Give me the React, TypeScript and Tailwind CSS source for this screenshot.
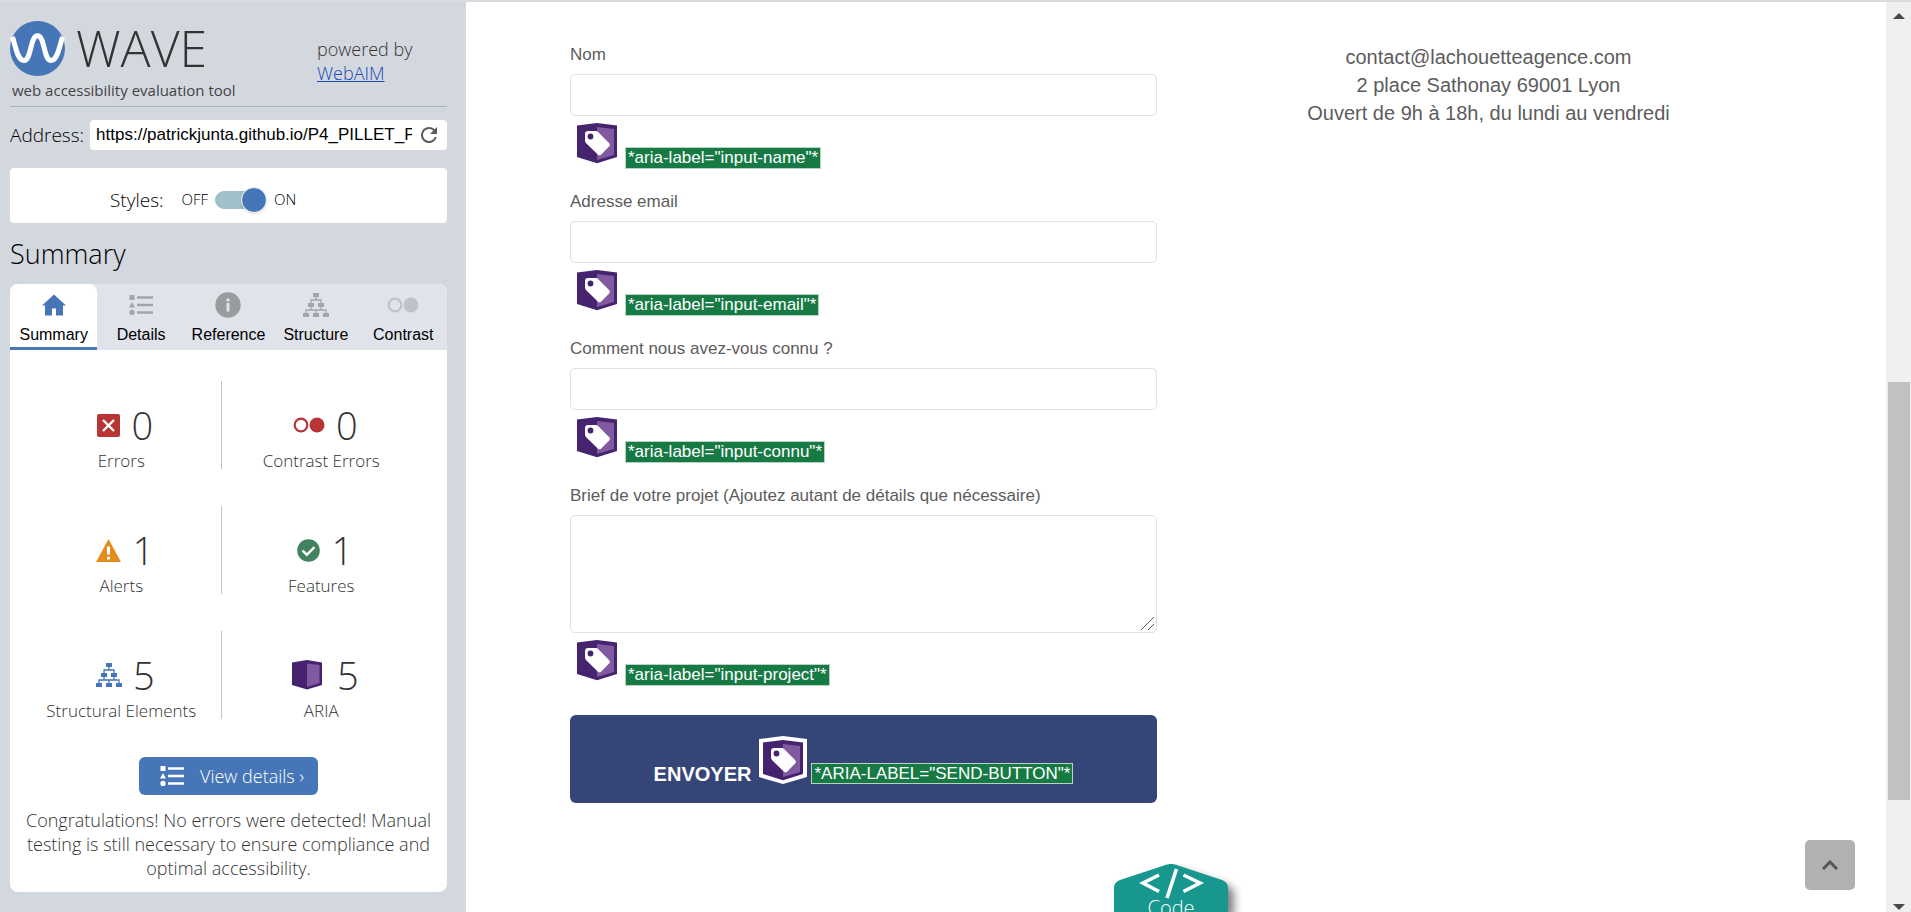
import { useState } from "react";
import type { ReactNode } from "react";

function WaveLogo() {
  return (
    <svg viewBox="0 0 55 55" className="size-[55px] shrink-0" aria-hidden="true">
      <circle cx="27.5" cy="27.5" r="27.5" fill="#4676b8" />
      <path
        d="M2.500 16 C6 27 7.500 39.500 14 39.500 C21.500 39.500 20 14.800 27.500 14.800 C35 14.800 33.500 39.500 41 39.500 C47.500 39.500 49 27 52.500 16"
        fill="none"
        stroke="#fff"
        strokeWidth="5"
      />
    </svg>
  );
}

function ReloadIcon() {
  return (
    <svg viewBox="4 4 16 16" className="size-4" fill="#5c5c5c" aria-hidden="true">
      <path d="M17.650 6.350A7.958 7.958 0 0 0 12 4a8 8 0 1 0 7.730 10h-2.080A6 6 0 1 1 12 6c1.660 0 3.140.690 4.220 1.780L13 11h7V4l-2.350 2.350z" />
    </svg>
  );
}

function HomeIcon() {
  return (
    <svg viewBox="0 0 24 22" className="h-[22px] w-6" fill="#4676b8" aria-hidden="true">
      <path d="M12 0.500 L24 11.500 H21 V21.500 H14 V14.500 H10 V21.500 H3 V11.500 H0 Z" />
    </svg>
  );
}

function ListIcon() {
  return (
    <svg viewBox="0 0 24 20" className="h-5 w-6" fill="currentColor" aria-hidden="true">
      <path d="M0.500 0h5v5h-5zM3 7l3 5.500H0zM8 1.200h16v2.600H8zM8 8.700h16v2.600H8zM8 16.200h16v2.600H8z" />
      <circle cx="3" cy="17.400" r="2.600" />
    </svg>
  );
}

function InfoIcon() {
  return (
    <svg viewBox="0 0 26 26" className="size-[26px]" aria-hidden="true">
      <circle cx="13" cy="13" r="12.700" fill="currentColor" />
      <path d="M11.500 6.500h3v3h-3zM11.500 11h3v8.500h-3z" fill="#e0e4ea" />
    </svg>
  );
}

function StructureIcon() {
  return (
    <svg viewBox="0 0 26 24" className="h-6 w-[26px]" fill="currentColor" aria-hidden="true">
      <path d="M10 0h6v4h-6zM5 10h6v4H5zM15 10h6v4h-6zM0 20h6v4H0zM10 20h6v4h-6zM20 20h6v4h-6z" />
      <path
        d="M13 4v3M8 10V7h10v3M8 14v3M3 20v-3h20v3M18 14v3M13 17v3"
        fill="none"
        stroke="currentColor"
        strokeWidth="1.300"
      />
    </svg>
  );
}

function ContrastIcon() {
  return (
    <svg viewBox="0 0 32 16" className="h-4 w-8" aria-hidden="true">
      <circle cx="8" cy="8" r="6.300" fill="none" stroke="currentColor" strokeWidth="2.200" />
      <circle cx="24" cy="8" r="7.500" fill="currentColor" />
    </svg>
  );
}

function ErrorIcon() {
  return (
    <svg viewBox="0 0 23 23" className="size-[23px]" aria-hidden="true">
      <rect width="23" height="23" rx="2" fill="#b93434" />
      <path d="M6 6l11 11M17 6L6 17" stroke="#fff" strokeWidth="2.400" />
    </svg>
  );
}

function AlertIcon() {
  return (
    <svg viewBox="0 0 25 23" className="h-[23px] w-[25px]" aria-hidden="true">
      <path d="M12.500 0L25 23H0z" fill="#e38d1c" />
      <path d="M11 7.500h3v8h-3zM11 17.800h3v2.800h-3z" fill="#fff" />
    </svg>
  );
}

function FeatureIcon() {
  return (
    <svg viewBox="0 0 23 23" className="size-[23px]" aria-hidden="true">
      <circle cx="11.500" cy="11.500" r="11.300" fill="#42835f" />
      <path d="M5.500 11.500l4.300 4.300 7.700-7.700" fill="none" stroke="#fff" strokeWidth="2.400" />
    </svg>
  );
}

function AriaIcon() {
  return (
    <svg viewBox="0 0 34 30" className="h-[30px] w-[34px]" aria-hidden="true">
      <path d="M0 2.500L15 0l15 2.500V25l-15 4.500L0 25z" fill="#46236e" />
      <path d="M15 3.500L27.500 5v18L15 27z" fill="#8059a0" />
    </svg>
  );
}

function LabelBadge({ outlined = false }: { outlined?: boolean }) {
  return (
    <svg viewBox="-4 -4 48 48" className="size-12 shrink-0" role="img" aria-label="ARIA label">
      {outlined && <path d="M-4 -1L20 -4 44 -1V37L20 44 -4 37z" fill="#fff" />}
      <path d="M0 2.500L20 0l20 2.500V34l-20 6.300L0 34z" fill="#46236e" />
      <path d="M20 4L37 6v26L20 37z" fill="#8059a0" />
      <path
        d="M8 11c0-2 1-3 3-3h7.500c1.200 0 2 .4 2.800 1.200L32 20c1.200 1.200 1.200 2.400.1 3.600l-7.800 7.800c-1.200 1.200-2.400 1.200-3.600 0L9.200 20.300C8.400 19.500 8 18.700 8 17.600z"
        fill="#fff"
      />
      <circle cx="13.500" cy="13.500" r="2.900" fill="#46236e" />
    </svg>
  );
}

const tabs: { name: string; icon: ReactNode; tone: string }[] = [
  { name: "Summary", icon: <HomeIcon />, tone: "text-[#4676b8]" },
  { name: "Details", icon: <ListIcon />, tone: "text-[#a2a5a9]" },
  { name: "Reference", icon: <InfoIcon />, tone: "text-[#999c9f]" },
  { name: "Structure", icon: <StructureIcon />, tone: "text-[#a2a5a9]" },
  { name: "Contrast", icon: <ContrastIcon />, tone: "text-[#bfc2c7]" },
];

const stats: { name: string; count: number; icon: ReactNode }[] = [
  { name: "Errors", count: 0, icon: <ErrorIcon /> },
  { name: "Contrast Errors", count: 0, icon: <span className="text-[#b93434]"><ContrastIcon /></span> },
  { name: "Alerts", count: 1, icon: <AlertIcon /> },
  { name: "Features", count: 1, icon: <FeatureIcon /> },
  { name: "Structural Elements", count: 5, icon: <span className="text-[#4676b8]"><StructureIcon /></span> },
  { name: "ARIA", count: 5, icon: <AriaIcon /> },
];

function Sidebar() {
  const [styled, setStyled] = useState(true);
  const [active, setActive] = useState("Summary");
  return (
    <aside className="w-[466px] shrink-0 bg-[#d3d8df] pr-[19px] pl-[10px] font-['Open_Sans',sans-serif] font-[350] text-black">
      <header className="flex h-[105px] justify-between border-b border-[#aab2c2] pt-[15px]">
        <div className="pt-1">
          <div className="flex items-center gap-[11px]">
            <WaveLogo />
            <h1 className="text-[50px] leading-[55px] font-light text-[#333]">WAVE</h1>
          </div>
          <p className="pl-[2px] text-[15px] leading-7 font-normal text-[#444]">web accessibility evaluation tool</p>
        </div>
        <p className="w-[130px] pt-5 text-[18px] leading-6 text-[#333]">
          powered by
          <br />
          <a href="#webaim" className="text-[#1a48b8] underline">WebAIM</a>
        </p>
      </header>

      <div className="mt-[13px] flex items-center gap-[6px]">
        <label htmlFor="address" className="text-[19px] leading-6 whitespace-nowrap">Address:</label>
        <div className="flex h-[30px] flex-1 items-center rounded bg-white pr-[10px] pl-[6px]">
          <input
            id="address"
            defaultValue="https://patrickjunta.github.io/P4_PILLET_Patrick/"
            className="h-full w-full min-w-0 flex-1 font-['Liberation_Sans',sans-serif] text-[17px] font-normal outline-none"
          />
          <button type="button" aria-label="Reload" className="ml-[9px]"><ReloadIcon /></button>
        </div>
      </div>

      <div className="mt-[18px] flex h-[55px] items-center rounded bg-white pt-2 pl-[100px]">
        <label htmlFor="styles" className="text-[19px] leading-6">Styles:</label>
        <span className="ml-[18px] text-[15px]">OFF</span>
        <div className="relative mx-[7px] flex h-[26px] w-[52px] items-center">
          <input
            id="styles"
            type="checkbox"
            checked={styled}
            onChange={() => setStyled(!styled)}
            className="peer h-[18px] w-12 appearance-none rounded-full bg-[#9fc1cb]"
          />
          <span className="pointer-events-none absolute left-0 size-[26px] rounded-full border border-white bg-[#4676b8] shadow peer-checked:left-[26px]" />
        </div>
        <span className="text-[15px]">ON</span>
      </div>

      <h2 className="mt-[13px] text-[27px] leading-9">Summary</h2>

      <div className="mt-3 rounded-lg bg-white">
        <div role="tablist" className="grid h-[66px] grid-cols-5 rounded-t-lg bg-[#e0e4ea]">
          {tabs.map((t) => (
            <button
              key={t.name}
              type="button"
              role="tab"
              aria-selected={active === t.name}
              onClick={() => setActive(t.name)}
              className="flex flex-col items-center rounded-t-lg border-b-[3px] border-transparent pt-px font-['Liberation_Sans',sans-serif] text-[16px] leading-5 font-normal aria-selected:border-[#4676b8] aria-selected:bg-white"
            >
              <span className={`flex h-10 items-center ${t.tone}`}>{t.icon}</span>
              <span>{t.name}</span>
            </button>
          ))}
        </div>

        <ul className="grid grid-cols-2 gap-y-[37px] pt-[31px] pr-[26px] pl-3 text-[#333]">
          {stats.map((s) => (
            <li
              key={s.name}
              className="flex h-[88px] flex-col items-center justify-end border-[#c4c4c4] odd:border-r"
            >
              <div className="mb-[2px] flex h-[52px] items-center gap-[11px] pl-2">
                {s.icon}
                <span className="text-[38px] leading-[52px]">{s.count}</span>
              </div>
              <span className="text-[17px] leading-4 font-light">{s.name}</span>
            </li>
          ))}
        </ul>

        <div className="flex flex-col items-center px-2 pt-[38px] pb-3">
          <button
            type="button"
            className="flex h-[38px] items-center gap-4 rounded-md bg-[#4676b8] pr-[14px] pl-[21px] text-[18px] text-white"
          >
            <ListIcon />
            View details ›
          </button>
          <p className="mt-[13px] text-center text-[18px] leading-6 text-[#333]">
            Congratulations! No errors were detected! Manual testing is still necessary to ensure compliance and optimal
            accessibility.
          </p>
        </div>
      </div>
    </aside>
  );
}

function AriaNote({ value }: { value: string }) {
  return (
    <span className="border border-[#b9d3c3] bg-[#177a45] px-[2px] text-[17px] leading-5 whitespace-nowrap text-white">
      {`*aria-label="${value}"*`}
    </span>
  );
}

const fieldBox = "block w-full rounded-[5px] border border-[#e1e1e1] bg-white px-3";

function Field({ id, label, note, multiline = false }: { id: string; label: string; note: string; multiline?: boolean }) {
  return (
    <div>
      <label htmlFor={id} className="mb-[7px] block text-[17px] leading-6">{label}</label>
      {multiline ? (
        <div className="relative">
          <textarea id={id} className={`${fieldBox} h-[118px] resize py-2`} />
          <svg
            viewBox="0 0 15 15"
            className="pointer-events-none absolute right-[2px] bottom-[2px] size-[15px] bg-white"
            stroke="#555"
            aria-hidden="true"
          >
            <path d="M1 14L14 1M8 14l6-6" />
          </svg>
        </div>
      ) : (
        <input id={id} type="text" className={`${fieldBox} h-[42px]`} />
      )}
      <div className="mt-[3px] flex items-start gap-1 pl-[3px]">
        <LabelBadge />
        <span className="flex h-[50px] items-end"><AriaNote value={note} /></span>
      </div>
    </div>
  );
}

function CodeTab() {
  return (
    <button
      type="button"
      className="absolute bottom-0 left-[648px] h-12 w-[130px] overflow-hidden font-['Open_Sans',sans-serif] text-[20px] leading-6 font-[350] text-white"
    >
      <svg viewBox="0 0 130 48" className="absolute inset-0 h-full w-full drop-shadow-[6px_6px_4px_rgba(0,0,0,0.5)]" aria-hidden="true">
        <path d="M0 48V24c0-4 2-6 6-8L50 1.500c5-2 9-2 14 0L108 16c4 2 6 4 6 8v24z" fill="#18978f" />
        <path d="M45 11L29 19 45 27.500M69.500 11L86 19 69.500 27.500M62.500 5L53 34" fill="none" stroke="#fff" strokeWidth="3.600" />
      </svg>
      <span className="absolute top-8 left-0 w-[114px] text-center">Code</span>
    </button>
  );
}

function PageScrollbar() {
  return (
    <div className="flex w-[25px] shrink-0 flex-col items-center bg-[#f0f0f0]" aria-hidden="true">
      <svg viewBox="0 0 12 6" className="mt-[11px] h-[6px] w-3" fill="#484848"><path d="M6 0l6 6H0z" /></svg>
      <div className="mt-[363px] h-[418px] w-[22px] bg-[#c1c1c1]" />
      <svg viewBox="0 0 12 6" className="mt-auto mb-[2px] h-[6px] w-3" fill="#484848"><path d="M6 6L0 0h12z" /></svg>
    </div>
  );
}

export default function App() {
  return (
    <div className="flex h-screen overflow-hidden border-t-2 border-[#dadae0] bg-white">
      <Sidebar />
      <main className="relative flex-1 font-['Liberation_Sans',sans-serif] text-[#5c5c5c]">
        <div className="grid grid-cols-2 gap-[38px] px-[104px] pt-[41px]">
          <form className="flex flex-col gap-[21px]" onSubmit={(e) => e.preventDefault()}>
            <Field id="name" label="Nom" note="input-name" />
            <Field id="email" label="Adresse email" note="input-email" />
            <Field id="connu" label="Comment nous avez-vous connu ?" note="input-connu" />
            <Field id="project" label="Brief de votre projet (Ajoutez autant de détails que nécessaire)" note="input-project" multiline />
            <button
              type="submit"
              className="mt-2 flex h-[88px] items-end justify-center rounded-md bg-[#354577] pb-[17px] font-bold text-white uppercase"
            >
              <span className="mr-2 text-[20px] leading-6">Envoyer</span>
              <span className="pb-[2px]"><LabelBadge outlined /></span>
              <span className="ml-1 font-normal"><AriaNote value="send-button" /></span>
            </button>
          </form>
          <address className="text-center text-[20px] leading-7 not-italic">
            contact@lachouetteagence.com
            <br />
            2 place Sathonay 69001 Lyon
            <br />
            Ouvert de 9h à 18h, du lundi au vendredi
          </address>
        </div>
        <CodeTab />
        <button
          type="button"
          aria-label="Back to top"
          className="absolute right-[31px] bottom-[22px] flex size-[50px] items-center justify-center rounded-[5px] bg-[#b1b1b1]"
        >
          <svg viewBox="0 0 16 10" className="h-[10px] w-4" fill="none" stroke="#555" strokeWidth="3" aria-hidden="true">
            <path d="M1 9l7-7 7 7" />
          </svg>
        </button>
      </main>
      <PageScrollbar />
    </div>
  );
}
